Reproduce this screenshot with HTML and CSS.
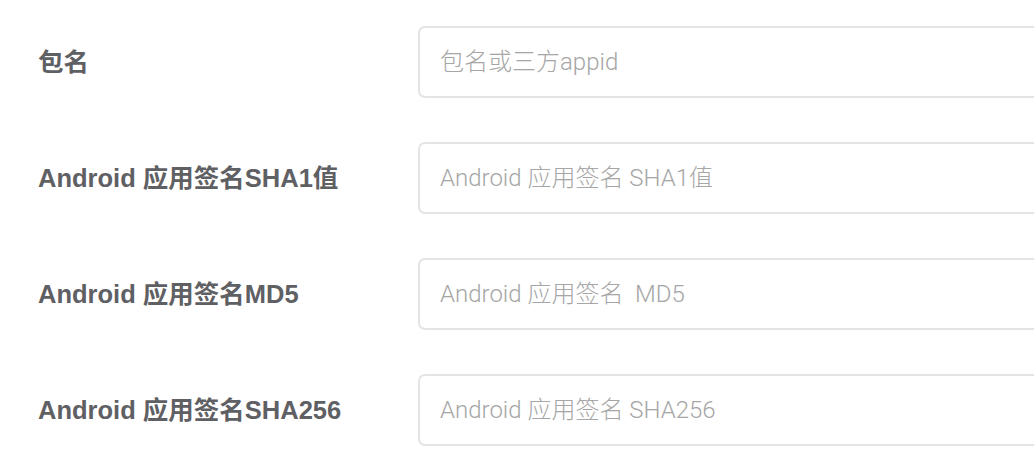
FILE: index.html
```html
<!DOCTYPE html>
<html lang="zh">
<head>
<meta charset="utf-8">
<link rel="stylesheet" href="styles.css">
</head>
<body>
<form class="form">
  <div class="row">
    <label class="label">包名</label>
    <input class="input" type="text" placeholder="包名或三方appid">
  </div>
  <div class="row">
    <label class="label">Android 应用签名SHA1值</label>
    <input class="input" type="text" placeholder="Android 应用签名 SHA1值">
  </div>
  <div class="row">
    <label class="label">Android 应用签名MD5</label>
    <input class="input" type="text" placeholder="Android 应用签名  MD5">
  </div>
  <div class="row">
    <label class="label">Android 应用签名SHA256</label>
    <input class="input" type="text" placeholder="Android 应用签名 SHA256">
  </div>
</form>
</body>
</html>
```

FILE: styles.css
```css
html, body {
  margin: 0;
  padding: 0;
  background: #ffffff;
  overflow: hidden;
}
.form {
  display: flex;
  flex-direction: column;
  gap: 44px;
  padding: 26px 0 0 38px;
  width: 1200px;
}
.row {
  display: flex;
  align-items: center;
  height: 72px;
}
.label {
  width: 380px;
  flex: none;
  font-family: "Liberation Sans", "Noto Sans CJK SC", sans-serif;
  font-weight: bold;
  font-size: 25.5px;
  line-height: 30px;
  padding-bottom: 1px;
  color: #5f6064;
}
.input {
  box-sizing: border-box;
  width: 700px;
  height: 72px;
  border: 2px solid #e4e4e4;
  border-radius: 7px;
  padding: 0 20px;
  font-family: "Roboto", "Noto Sans CJK SC", sans-serif;
  font-size: 24px;
  font-weight: 300;
  color: #333;
  outline: none;
  background: #fff;
}
.input::placeholder {
  color: #a6a6a6;
  font-weight: 300;
}
```
